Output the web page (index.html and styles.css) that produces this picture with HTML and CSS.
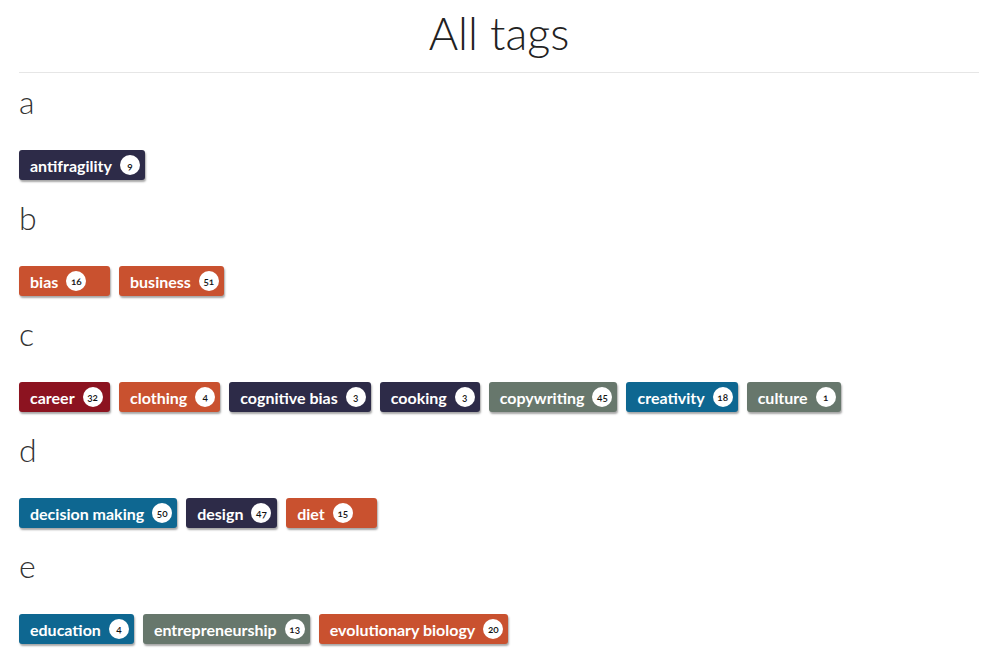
FILE: index.html
```html
<!DOCTYPE html>
<html lang="en">

<head>
    <meta charset="UTF-8">
    <meta name="viewport" content="width=device-width, initial-scale=1.0">
    <title>All tags</title>
    <link rel="stylesheet" href="styles.css">
</head>

<body>
    <div id="page">
        <h1 class="title">All tags</h1>
        <hr class="rule">

        <div class="group">
            <h2 class="letter">a</h2>
            <div class="tags">
                <a class="tag navy">antifragility <span class="count">9</span></a>
            </div>
        </div>

        <div class="group">
            <h2 class="letter">b</h2>
            <div class="tags">
                <a class="tag orange">bias <span class="count">16</span></a>
                <a class="tag orange">business <span class="count">51</span></a>
            </div>
        </div>

        <div class="group">
            <h2 class="letter">c</h2>
            <div class="tags">
                <a class="tag red">career <span class="count">32</span></a>
                <a class="tag orange">clothing <span class="count">4</span></a>
                <a class="tag navy">cognitive bias <span class="count">3</span></a>
                <a class="tag navy">cooking <span class="count">3</span></a>
                <a class="tag grey">copywriting <span class="count">45</span></a>
                <a class="tag blue">creativity <span class="count">18</span></a>
                <a class="tag grey">culture <span class="count">1</span></a>
            </div>
        </div>

        <div class="group">
            <h2 class="letter">d</h2>
            <div class="tags">
                <a class="tag blue">decision making <span class="count">50</span></a>
                <a class="tag navy">design <span class="count">47</span></a>
                <a class="tag orange">diet <span class="count">15</span></a>
            </div>
        </div>

        <div class="group">
            <h2 class="letter">e</h2>
            <div class="tags">
                <a class="tag blue">education <span class="count">4</span></a>
                <a class="tag grey">entrepreneurship <span class="count">13</span></a>
                <a class="tag orange">evolutionary biology <span class="count">20</span></a>
            </div>
        </div>
    </div>
</body>

</html>
```

FILE: styles.css
```css
/* reset start */
* {
    padding: 0;
    margin: 0;
    box-sizing: border-box;
}

html,
body {
    width: 100%;
    height: 100%;
}

body {
    overflow: hidden;
    background-color: #fff;
    color: #222;
    font-family: "Lato", "Open Sans", sans-serif;
}

/* reset end */
#page {
    width: 960px;
    margin-left: 19px;
}

.title {
    font-weight: 300;
    font-size: 45px;
    line-height: 60px;
    padding-top: 3px;
    text-align: center;
    color: #222;
}

.rule {
    border: 0;
    border-top: 1px solid #e6e6e6;
    margin-top: 9px;
    margin-bottom: 9px;
}

.letter {
    font-weight: 300;
    font-size: 32px;
    line-height: 40px;
    height: 40px;
    margin-bottom: 28px;
    color: #333;
}

.tags {
    display: flex;
    gap: 9px;
    height: 30px;
    margin-bottom: 18px;
}

.tag {
    display: flex;
    align-items: center;
    gap: 8px;
    min-width: 91px;
    height: 30px;
    padding: 0 5px 0 11px;
    border-radius: 3px;
    color: #fff;
    font-weight: 700;
    font-size: 16px;
    box-shadow: 1px 2px 2px rgba(0, 0, 0, .35);
}

.count {
    display: flex;
    align-items: center;
    justify-content: center;
    width: 20px;
    height: 20px;
    border-radius: 50%;
    background-color: #fff;
    color: #111;
    font-size: 10px;
    font-weight: 600;
    font-variant-numeric: oldstyle-nums;
}

.navy {
    background-color: #2d2b48;
}

.orange {
    background-color: #c9512f;
}

.red {
    background-color: #8c1320;
}

.grey {
    background-color: #67776c;
}

.blue {
    background-color: #0e6791;
}
```
